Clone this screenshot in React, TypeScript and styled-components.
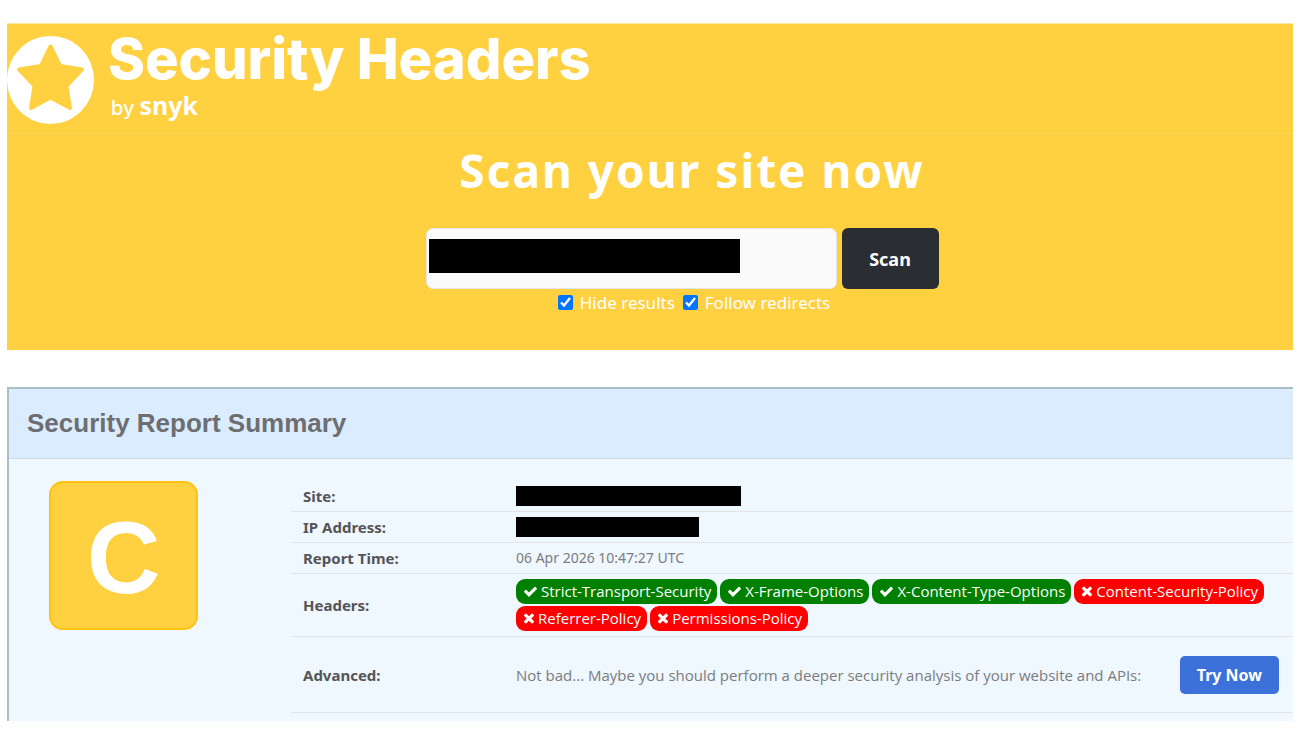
import React from "react";
import styled, { createGlobalStyle } from "styled-components";

const GlobalStyle = createGlobalStyle`
  *, *::before, *::after { box-sizing: border-box; }
  body {
    margin: 0;
    background: #ffffff;
    color: #7b7c7e;
    font-family: "Open Sans", "Noto Sans", sans-serif;
    font-size: 15px;
    line-height: 20px;
  }
  h1, h2, p { margin: 0; }
`;

const Page = styled.div`
  padding: 23px 7px 24px;
`;

const Hero = styled.div`
  background: #ffd141;
  color: #ffffff;
  font-family: "Noto Sans", sans-serif;
`;

const SiteHeader = styled.header`
  height: 111px;
  border-top: 1px solid #ffe7a0;
  border-bottom: 1px solid #ffd658;
`;

const Brand = styled.a`
  display: inline-flex;
  gap: 14px;
  color: inherit;
  text-decoration: none;
`;

const BrandMark = styled.svg`
  width: 87px;
  height: 88px;
  margin-top: 12px;
`;

const BrandText = styled.span`
  display: flex;
  flex-direction: column;
`;

const BrandName = styled.span`
  font: 800 56px/70px Inter, sans-serif;
`;

const BrandOwner = styled.span`
  display: flex;
  align-items: baseline;
  gap: 5px;
  padding-left: 3px;
  font: 500 20px/22px Inter, sans-serif;
`;

const OwnerName = styled.strong`
  font: 700 25px/22px "Noto Sans", sans-serif;
`;

const ScanSection = styled.section`
  display: flex;
  flex-direction: column;
  align-items: center;
  padding: 6px 0 35px 84px;
`;

const ScanTitle = styled.h1`
  font-size: 46px;
  line-height: 60px;
  font-weight: 700;
  letter-spacing: 2px;
`;

const ScanForm = styled.form`
  display: flex;
  flex-direction: column;
  align-items: center;
  padding-top: 28px;
`;

const ScanRow = styled.div`
  display: flex;
  gap: 5px;
  margin-right: 20px;
`;

const AddressField = styled.div`
  position: relative;
`;

const AddressInput = styled.input`
  display: block;
  width: 411px;
  height: 61px;
  padding: 0 12px;
  border: 1px solid #e6e6e6;
  border-radius: 7px;
  background: #fafafa;
  font: inherit;
`;

const Redaction = styled.span<{ $width: number; $height: number }>`
  display: block;
  width: ${(p) => p.$width}px;
  height: ${(p) => p.$height}px;
  background: #000000;
`;

const FieldRedaction = styled(Redaction)`
  position: absolute;
  left: 3px;
  top: 11px;
`;

const ScanButton = styled.button`
  width: 97px;
  height: 61px;
  border: 0;
  border-radius: 6px;
  background: #2a2d32;
  color: #ffffff;
  font: 700 18px/24px "Noto Sans", sans-serif;
`;

const Options = styled.div`
  display: flex;
  gap: 8px;
  padding: 2px 0 0 4px;
`;

const Option = styled.label`
  display: flex;
  align-items: center;
  gap: 7px;
  font-size: 17px;
  line-height: 24px;
`;

const Checkbox = styled.input`
  width: 15px;
  height: 15px;
  margin: 0 0 2px;
  accent-color: #0075ff;
`;

const Report = styled.section`
  margin-top: 37px;
  border-top: 2px solid #a9c1c4;
  border-left: 2px solid #a9c1c4;
  background: #eff7ff;
`;

const ReportHeader = styled.header`
  padding: 19px 18px 20px;
  border-bottom: 1px solid #cfdbe5;
  background: #dbecfe;
`;

const ReportTitle = styled.h2`
  color: #6d6e71;
  font: 700 26px/30px "Liberation Sans", Arial, sans-serif;
`;

const ReportBody = styled.div`
  display: flex;
  padding: 22px 0 8px 40px;
`;

const Grade = styled.div`
  flex: none;
  width: 149px;
  height: 149px;
  margin-right: 93px;
  border: 2px solid #ffc30f;
  border-radius: 14px;
  background: #ffd141;
  color: #ffffff;
  text-align: center;
  font: 700 102px/150px "Liberation Sans", Arial, sans-serif;
`;

const Facts = styled.table`
  flex: 1;
  border-collapse: collapse;
`;

const FactRow = styled.tr`
  border-bottom: 1px solid #e2e3e6;
`;

const FactLabel = styled.th`
  width: 213px;
  padding: 5px 12px;
  color: #555555;
  font-family: "Noto Sans", sans-serif;
  font-weight: 700;
  text-align: left;
`;

const FactValue = styled.td`
  padding: 5px 12px;
`;

const Timestamp = styled.time`
  display: block;
  font: 400 14px/20px "Noto Sans", sans-serif;
`;

const Badges = styled.div`
  display: flex;
  flex-wrap: wrap;
  gap: 2px 3px;
`;

const Badge = styled.span<{ $ok: boolean }>`
  display: flex;
  align-items: center;
  gap: 3px;
  padding: 2px 6px 3px 7px;
  border-radius: 9px;
  background: ${(p) => (p.$ok ? "#008000" : "#ff0000")};
  color: #ffffff;
`;

const Advice = styled.div`
  display: flex;
  align-items: center;
  justify-content: space-between;
  padding: 14px 2px 13px 0;
`;

const TryLink = styled.a`
  padding: 7px 17px;
  border-radius: 5px;
  background: #3b71d8;
  color: #ffffff;
  font: 700 16px/24px "Noto Sans", sans-serif;
  text-decoration: none;
`;

const CheckIcon = () => (
  <svg width="15" height="15" viewBox="0 0 1792 1792" fill="currentColor" aria-hidden="true">
    <path d="M1671 566q0 40-28 68l-724 724-136 136q-28 28-68 28t-68-28l-136-136-362-362q-28-28-28-68t28-68l136-136q28-28 68-28t68 28l294 295 656-657q28-28 68-28t68 28l136 136q28 28 28 68z" />
  </svg>
);

const CrossIcon = () => (
  <svg width="12" height="16" viewBox="192 0 1408 1792" fill="currentColor" aria-hidden="true">
    <path d="M1490 1322q0 40-28 68l-136 136q-28 28-68 28t-68-28l-294-294-294 294q-28 28-68 28t-68-28l-136-136q-28-28-28-68t28-68l294-294-294-294q-28-28-28-68t28-68l136-136q28-28 68-28t68 28l294 294 294-294q28-28 68-28t68 28l136 136q28 28 28 68t-28 68l-294 294 294 294q28 28 28 68z" />
  </svg>
);

const headers = [
  { name: "Strict-Transport-Security", ok: true },
  { name: "X-Frame-Options", ok: true },
  { name: "X-Content-Type-Options", ok: true },
  { name: "Content-Security-Policy", ok: false },
  { name: "Referrer-Policy", ok: false },
  { name: "Permissions-Policy", ok: false },
];

export default function App() {
  return (
    <>
      <GlobalStyle />
      <Page>
        <Hero>
          <SiteHeader>
            <Brand href="#">
              <BrandMark viewBox="0 0 87 88" aria-hidden="true">
                <ellipse cx="43.5" cy="44" rx="43.5" ry="44" fill="#ffffff" />
                <path
                  d="M43.5 10.5L53 30L75 33.5L59.5 50L63 72L43.5 61.5L24 72L27.5 50L12 33.5L34 30Z"
                  fill="#ffd141"
                  stroke="#ffd141"
                  strokeWidth="4"
                  strokeLinejoin="round"
                />
              </BrandMark>
              <BrandText>
                <BrandName>Security Headers</BrandName>
                <BrandOwner>
                  by <OwnerName>snyk</OwnerName>
                </BrandOwner>
              </BrandText>
            </Brand>
          </SiteHeader>
          <ScanSection>
            <ScanTitle>Scan your site now</ScanTitle>
            <ScanForm onSubmit={(e) => e.preventDefault()}>
              <ScanRow>
                <AddressField>
                  <AddressInput type="text" aria-label="Site address" />
                  <FieldRedaction $width={311} $height={34} />
                </AddressField>
                <ScanButton type="submit">Scan</ScanButton>
              </ScanRow>
              <Options>
                <Option>
                  <Checkbox type="checkbox" defaultChecked />
                  Hide results
                </Option>
                <Option>
                  <Checkbox type="checkbox" defaultChecked />
                  Follow redirects
                </Option>
              </Options>
            </ScanForm>
          </ScanSection>
        </Hero>

        <Report>
          <ReportHeader>
            <ReportTitle>Security Report Summary</ReportTitle>
          </ReportHeader>
          <ReportBody>
            <Grade>C</Grade>
            <Facts>
              <tbody>
                <FactRow>
                  <FactLabel scope="row">Site:</FactLabel>
                  <FactValue>
                    <Redaction $width={225} $height={20} />
                  </FactValue>
                </FactRow>
                <FactRow>
                  <FactLabel scope="row">IP Address:</FactLabel>
                  <FactValue>
                    <Redaction $width={183} $height={20} />
                  </FactValue>
                </FactRow>
                <FactRow>
                  <FactLabel scope="row">Report Time:</FactLabel>
                  <FactValue>
                    <Timestamp dateTime="2026-04-06T10:47:27Z">06 Apr 2026 10:47:27 UTC</Timestamp>
                  </FactValue>
                </FactRow>
                <FactRow>
                  <FactLabel scope="row">Headers:</FactLabel>
                  <FactValue>
                    <Badges>
                      {headers.map((h) => (
                        <Badge key={h.name} $ok={h.ok}>
                          {h.ok ? <CheckIcon /> : <CrossIcon />}
                          {h.name}
                        </Badge>
                      ))}
                    </Badges>
                  </FactValue>
                </FactRow>
                <FactRow>
                  <FactLabel scope="row">Advanced:</FactLabel>
                  <FactValue>
                    <Advice>
                      Not bad... Maybe you should perform a deeper security analysis of your website and APIs:
                      <TryLink href="#">Try Now</TryLink>
                    </Advice>
                  </FactValue>
                </FactRow>
              </tbody>
            </Facts>
          </ReportBody>
        </Report>
      </Page>
    </>
  );
}
